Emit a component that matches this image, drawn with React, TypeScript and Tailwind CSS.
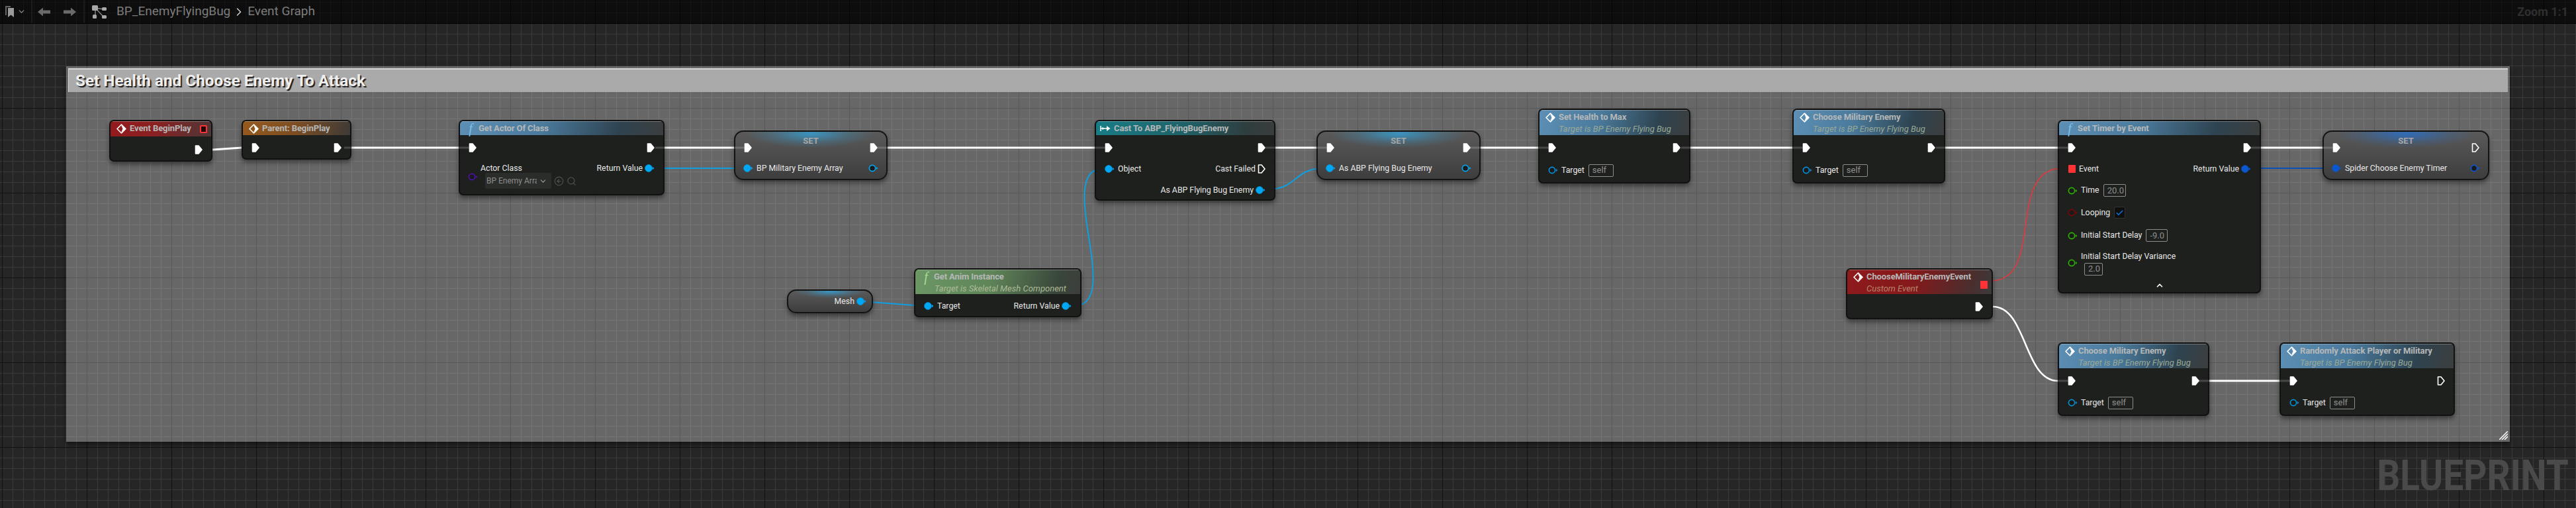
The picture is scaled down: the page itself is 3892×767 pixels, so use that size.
import React from 'react';
import { Check, ChevronDown, ChevronRight, ChevronUp, CircleArrowLeft, Search } from 'lucide-react';

const ExecPin = ({ hollow = false }: { hollow?: boolean }) => (
  <svg width="12" height="14" viewBox="0 0 12 14" className="shrink-0">
    <path
      d="M1.5 1 H6 L11 7 L6 13 H1.5 Z"
      fill={hollow ? 'none' : '#fff'}
      stroke="#fff"
      strokeWidth="1.6"
      strokeLinejoin="round"
    />
  </svg>
);

const DataPin = ({ color, hollow = false }: { color: string; hollow?: boolean }) => (
  <svg width="15" height="12" viewBox="0 0 15 12" className="shrink-0">
    <circle cx="6" cy="6" r={hollow ? 4.6 : 5.4} fill={hollow ? '#1a1a1a' : color} stroke={color} strokeWidth={hollow ? 1.7 : 0.6} />
    <path d="M12 3.8 L14.4 6 L12 8.2 Z" fill={color} />
  </svg>
);

const EventIcon = () => (
  <svg width="15" height="15" viewBox="0 0 15 15" className="shrink-0">
    <path d="M7.5 1 L14 7.5 L7.5 14 L1 7.5 Z" fill="none" stroke="#fff" strokeWidth="1.6" strokeLinejoin="round" />
    <path d="M7 2 L14 7.5 L7 13 L9.5 7.5 Z" fill="#fff" />
  </svg>
);

const FuncIcon = ({ color }: { color: string }) => (
  <span className={`w-[14px] text-center font-['Liberation_Serif'] text-[20px] leading-none italic ${color}`}>f</span>
);

const CastIcon = () => (
  <svg width="16" height="10" viewBox="0 0 16 10" className="-ml-[3px] shrink-0">
    <path d="M1 1 V9 M1 5 H11" stroke="#fff" strokeWidth="1.5" fill="none" />
    <path d="M10 1 L15.5 5 L10 9 Z" fill="#fff" />
    <path d="M3.5 2.5 L6 5 L3.5 7.5 Z" fill="#fff" />
  </svg>
);

const TextBox = ({ children, className = '' }: { children: React.ReactNode; className?: string }) => (
  <span className={`flex h-[19px] items-center rounded-[2px] border border-[#8d8d8d] px-[5px] text-[13px] text-[#8f8f8f] ${className}`}>
    {children}
  </span>
);

type NodeProps = {
  box: string;
  headerClass: string;
  icon?: React.ReactNode;
  title: string;
  subtitle?: string;
  subtitleClass?: string;
  extra?: React.ReactNode;
  children: React.ReactNode;
};

const GraphNode = ({ box, headerClass, icon, title, subtitle, subtitleClass, extra, children }: NodeProps) => (
  <div className={`absolute flex flex-col overflow-hidden rounded-[7px] border-2 border-[#101110] bg-[#1e201e] shadow-[0_4px_7px_rgba(0,0,0,0.45)] ${box}`}>
    <div className={`relative shrink-0 border-t border-white/30 pl-[9px] ${headerClass}`}>
      <div className="flex h-[20px] items-center gap-[5px]">
        {icon}
        <span className="text-[13px] font-bold tracking-[-0.1px] text-[#b6b8b8]">{title}</span>
      </div>
      {subtitle && <div className={`pl-[20px] text-[13px] leading-[16px] italic ${subtitleClass}`}>{subtitle}</div>}
      {extra}
    </div>
    <div className="flex flex-col pt-[3px] text-[12.3px] text-[#e8e8e8]">{children}</div>
  </div>
);

const VarNode = ({ box, glow, children }: { box: string; glow: string; children: React.ReactNode }) => (
  <div className={`absolute flex flex-col overflow-hidden rounded-[14px] border-2 border-[#141414] shadow-[0_4px_7px_rgba(0,0,0,0.45)] ${glow} ${box}`}>
    {children}
  </div>
);

const SetNode = ({ box, glow, name, pin, hollowOut }: { box: string; glow: string; name: string; pin: string; hollowOut?: boolean }) => (
  <VarNode box={box} glow={glow}>
    <div className="flex h-[48px] items-center justify-between px-[13px]">
      <ExecPin />
      <span className="mb-[21px] text-[13px] font-bold text-[#a8a8a8]">SET</span>
      <ExecPin hollow={hollowOut} />
    </div>
    <div className="flex h-[14px] items-center justify-between px-[12px] text-[12.3px] text-[#e8e8e8]">
      <span className="flex items-center gap-[5px]">
        <DataPin color={pin} />
        {name}
      </span>
      <DataPin color={pin} hollow />
    </div>
  </VarNode>
);

const Row = ({ className = 'h-[32px]', children }: { className?: string; children: React.ReactNode }) => (
  <div className={`flex items-center justify-between px-[13px] ${className}`}>{children}</div>
);

const Pin = ({ children, gap = 'gap-[5px]' }: { children: React.ReactNode; gap?: string }) => (
  <span className={`flex items-center ${gap}`}>{children}</span>
);

const TargetRow = ({ className }: { className: string }) => (
  <Row className={className}>
    <Pin>
      <DataPin color="#0a8fd6" hollow />
      Target
      <TextBox className="ml-[1px] w-[38px]">self</TextBox>
    </Pin>
  </Row>
);

const ExecRow = ({ hollowOut }: { hollowOut?: boolean }) => (
  <Row>
    <ExecPin />
    <ExecPin hollow={hollowOut} />
  </Row>
);

const blueHeader = 'bg-[linear-gradient(105deg,#5d8fb5_0%,#4a7a9c_40%,#2e4350_78%,#3c3e3e_100%)]';
const setGlow =
  'bg-[radial-gradient(ellipse_42%_30%_at_50%_4%,#3a93c0_0%,rgba(58,147,192,0.3)_60%,transparent_100%),linear-gradient(#5a5a5a,#3d3d3d)]';
const darkGlow =
  'bg-[radial-gradient(ellipse_42%_30%_at_50%_4%,#2f6cb8_0%,rgba(47,108,184,0.3)_60%,transparent_100%),linear-gradient(#5a5a5a,#3d3d3d)]';
const targetSub = 'text-[#9aa996]';

// pin centre to node edge, these run over the node body
const stubs = [
  [531, 223, 520], [693, 223, 718], [1004, 223, 990], [1109, 223, 1132], [1341, 223, 1326], [1654, 223, 1678],
  [1927, 223, 1912], [1989, 223, 2012], [2237, 223, 2215], [2324, 223, 2340], [2554, 223, 2540], [2708, 223, 2725],
  [2939, 223, 2925], [3109, 223, 3130], [3416, 223, 3400], [3509, 223, 3530], [3109, 575, 3130], [3338, 575, 3320], [3444, 575, 3465],
];

export default function App() {
  return (
    <div className="relative flex h-[767px] w-[3892px] flex-col overflow-hidden bg-[#262626] font-['Roboto',sans-serif] [background-image:linear-gradient(#111_1px,transparent_1px),linear-gradient(to_right,#111_1px,transparent_1px),linear-gradient(#3a3a3a_1px,transparent_1px),linear-gradient(to_right,#3a3a3a_1px,transparent_1px)] [background-position:0_35px,3px_0,0_3px,3px_0] [background-size:128px_128px,128px_128px,16px_16px,16px_16px]">
      {/* top bar */}
      <div className="z-20 flex h-[36px] shrink-0 items-center justify-between border-b border-black bg-black/65 pr-[12px]">
        <div className="flex h-full items-center">
          <div className="flex h-full w-[49px] items-center border-r-2 border-[#1c1c1c] pl-[8px]">
            <svg width="13" height="17" viewBox="0 0 13 17">
              <path d="M0 0 H8 V2 H2 V14 H0 Z" fill="#666" />
              <path d="M4 3 H13 V17 L8.5 13.5 L4 17 Z" fill="#9a9a9a" />
            </svg>
            <ChevronDown size={13} strokeWidth={2.5} className="ml-[5px] text-[#8a8a8a]" />
          </div>
          <div className="flex h-full w-[79px] items-center gap-[20px] border-r-2 border-[#1c1c1c] pl-[8px]">
            <svg width="19" height="14" viewBox="0 0 19 14">
              <path d="M0 7 L8 0.5 V4.5 H19 V9.5 H8 V13.5 Z" fill="#6a6a6a" />
            </svg>
            <svg width="19" height="14" viewBox="0 0 19 14">
              <path d="M19 7 L11 0.5 V4.5 H0 V9.5 H11 V13.5 Z" fill="#6a6a6a" />
            </svg>
          </div>
          <svg width="22" height="20" viewBox="0 0 22 20" className="ml-[11px]">
            <path d="M5 4 L18 6 M5 4 L17 17 M5 4 V16" stroke="#8a8a8a" strokeWidth="1.4" fill="none" />
            <rect x="0" y="0" width="9" height="8" rx="1.5" fill="#a8a8a8" />
            <rect x="15" y="3" width="7" height="5" rx="1.5" fill="#a8a8a8" />
            <rect x="1" y="14" width="6" height="6" rx="1.5" fill="#a8a8a8" />
            <rect x="15" y="15" width="7" height="5" rx="1.5" fill="#a8a8a8" />
          </svg>
          <span className="ml-[15px] text-[19px] text-[#7c7c7c]">BP_EnemyFlyingBug</span>
          <ChevronRight size={20} strokeWidth={1.8} className="mx-[3px] text-[#d0d0d0]" />
          <span className="text-[19px] text-[#7c7c7c]">Event Graph</span>
        </div>
        <span className="text-[18px] font-bold text-[#2f2f2f]">Zoom 1:1</span>
      </div>

      {/* comment box */}
      <div className="absolute top-[100px] left-[100px] h-[567px] w-[3692px] bg-white/30 p-[3px] shadow-[0_3px_8px_rgba(0,0,0,0.55)]">
        <div className="flex h-[36px] items-center border-t-2 border-l border-[#d4d4d4] bg-[#aaaaaa] pl-[10px] text-[24.3px] font-bold text-[#eeeeee] [text-shadow:2px_2px_1px_rgba(0,0,0,0.85)]">
          Set Health and Choose Enemy To Attack
        </div>
        <svg width="13" height="13" viewBox="0 0 13 13" className="absolute right-[3px] bottom-[3px]">
          <path d="M0 13 L13 0 M4 13 L13 4 M8 13 L13 8" stroke="#fff" strokeWidth="1.5" />
        </svg>
      </div>

      <span className="absolute top-[680px] right-[11px] origin-right scale-x-[0.845] text-[65px] leading-[76px] font-bold text-[#4a4a4a]">
        BLUEPRINT
      </span>

      {/* wires */}
      <svg className="absolute top-0 left-0" width="3892" height="767" fill="none">
        <g stroke="#fff" strokeWidth="3">
          <path d="M321 226 L365 223" />
          <path d="M531 223 H693 M1004 223 H1109 M1341 223 H1654 M1927 223 H1989 M2237 223 H2324 M2554 223 H2708 M2939 223 H3109 M3416 223 H3509 M3338 575 H3444" />
          <path d="M3011 463 C3062 463, 3058 575, 3109 575" strokeWidth="2.5" />
        </g>
        <g stroke="#0f9fe0" strokeWidth="2">
          <path d="M1004 254 H1120" />
          <path d="M1303 455 L1381 461" />
          <path d="M1622 462 C1700 462, 1590 254, 1668 254" />
          <path d="M1915 286 C1960 286, 1955 254, 2000 254" />
        </g>
        <path d="M3402 254 H3530" stroke="#0b4fb8" strokeWidth="2" />
        <path d="M3008 424 C3090 424, 3030 254, 3116 254" stroke="#e2383e" strokeWidth="1.6" />
      </svg>

      <GraphNode
        box="left-[165px] top-[181px] h-[63px] w-[156px]"
        headerClass="h-[23px] bg-[linear-gradient(100deg,#931a1c_0%,#8a2022_45%,#4d3737_100%)]"
        icon={<EventIcon />}
        title="Event BeginPlay"
        extra={<span className="absolute top-[5px] right-[6px] h-[12px] w-[11px] rounded-[2px] border-2 border-[#ff3236] bg-[#220505]" />}
      >
        <Row className="h-[34px]">
          <span />
          <ExecPin />
        </Row>
      </GraphNode>

      <GraphNode
        box="left-[365px] top-[181px] h-[60px] w-[166px]"
        headerClass="h-[21px] bg-[linear-gradient(100deg,#97591c_0%,#7c4d22_50%,#3e3a36_100%)]"
        icon={<EventIcon />}
        title="Parent: BeginPlay"
      >
        <ExecRow />
      </GraphNode>

      <GraphNode
        box="left-[693px] top-[181px] h-[114px] w-[311px]"
        headerClass={`h-[21px] ${blueHeader}`}
        icon={<FuncIcon color="text-[#7cc0ea]" />}
        title="Get Actor Of Class"
      >
        <ExecRow />
        <div className="mt-[4px] flex h-[22px] items-center justify-between pr-[13px] pl-[31px]">
          Actor Class
          <Pin gap="gap-[3px]">
            Return Value
            <DataPin color="#00a8f4" />
          </Pin>
        </div>
        <div className="-mt-[4px] flex items-center pl-[12px]">
          <span className="-mt-[12px]">
            <DataPin color="#4b12ad" hollow />
          </span>
          <div className="ml-[11px] flex h-[24px] w-[100px] items-center justify-between rounded-[3px] bg-[#2b2d2b] pr-[6px] pl-[2px] text-[12px] text-[#8e8e8e]">
            <span className="w-[76px] overflow-hidden whitespace-nowrap">BP Enemy Array</span>
            <ChevronDown size={13} className="text-[#a0a0a0]" />
          </div>
          <CircleArrowLeft size={15} className="ml-[4px] text-[#4e4e4e]" />
          <Search size={15} className="ml-[4px] text-[#4e4e4e]" />
        </div>
      </GraphNode>

      <SetNode box="left-[1109px] top-[197px] h-[75px] w-[232px]" glow={setGlow} name="BP Military Enemy Array" pin="#00a8f4" />

      <VarNode box="left-[1189px] top-[437px] h-[36px] w-[130px]" glow={setGlow}>
        <div className="flex h-full items-center justify-end gap-[3px] pr-[8px] text-[12.3px] text-[#e8e8e8]">
          Mesh
          <DataPin color="#00a8f4" />
        </div>
      </VarNode>

      <GraphNode
        box="left-[1381px] top-[405px] h-[74px] w-[253px]"
        headerClass="h-[37px] bg-[linear-gradient(105deg,#6c9765_0%,#5f8559_45%,#39463a_85%,#3c3e3c_100%)]"
        icon={<FuncIcon color="text-[#a8dc94]" />}
        title="Get Anim Instance"
        subtitle="Target is Skeletal Mesh Component"
        subtitleClass="text-[#acba96]"
      >
        <Row className="h-[30px]">
          <Pin>
            <DataPin color="#00a8f4" />
            Target
          </Pin>
          <Pin gap="gap-[3px]">
            Return Value
            <DataPin color="#00a8f4" />
          </Pin>
        </Row>
      </GraphNode>

      <GraphNode
        box="left-[1654px] top-[181px] h-[122px] w-[273px]"
        headerClass="h-[21px] bg-[linear-gradient(100deg,#187d86_0%,#1f6168_50%,#2f3d3e_85%,#3a3d3d_100%)]"
        icon={<CastIcon />}
        title="Cast To ABP_FlyingBugEnemy"
      >
        <ExecRow />
        <Row>
          <Pin>
            <DataPin color="#00a8f4" />
            Object
          </Pin>
          <Pin gap="gap-[3px]">
            Cast Failed
            <ExecPin hollow />
          </Pin>
        </Row>
        <Row>
          <span />
          <Pin gap="gap-[3px]">
            As ABP Flying Bug Enemy
            <DataPin color="#00a8f4" />
          </Pin>
        </Row>
      </GraphNode>

      <SetNode box="left-[1989px] top-[197px] h-[75px] w-[248px]" glow={setGlow} name="As ABP Flying Bug Enemy" pin="#00a8f4" />

      <GraphNode
        box="left-[2324px] top-[164px] h-[113px] w-[230px]"
        headerClass={`h-[38px] ${blueHeader}`}
        icon={<EventIcon />}
        title="Set Health to Max"
        subtitle="Target is BP Enemy Flying Bug"
        subtitleClass={targetSub}
      >
        <ExecRow />
        <TargetRow className="h-[36px]" />
      </GraphNode>

      <GraphNode
        box="left-[2708px] top-[164px] h-[113px] w-[231px]"
        headerClass={`h-[38px] ${blueHeader}`}
        icon={<EventIcon />}
        title="Choose Military Enemy"
        subtitle="Target is BP Enemy Flying Bug"
        subtitleClass={targetSub}
      >
        <ExecRow />
        <TargetRow className="h-[36px]" />
      </GraphNode>

      <GraphNode
        box="left-[2789px] top-[405px] h-[77px] w-[222px]"
        headerClass="h-[37px] bg-[linear-gradient(105deg,#8e1a1c_0%,#85191b_45%,#4a2e2e_85%,#3c3a3a_100%)]"
        icon={<EventIcon />}
        title="ChooseMilitaryEnemyEvent"
        subtitle="Custom Event"
        subtitleClass="text-[#b8856c]"
        extra={<span className="absolute top-[16px] right-[6px] h-[12px] w-[11px] rounded-[1px] bg-[#ff3236]" />}
      >
        <Row className="h-[32px]">
          <span />
          <ExecPin />
        </Row>
      </GraphNode>

      <GraphNode
        box="left-[3109px] top-[181px] h-[262px] w-[307px]"
        headerClass={`h-[21px] ${blueHeader}`}
        icon={<FuncIcon color="text-[#7cc0ea]" />}
        title="Set Timer by Event"
      >
        <ExecRow />
        <Row>
          <Pin gap="gap-[5px]">
            <span className="ml-[1px] h-[12px] w-[11px] rounded-[1px] bg-[#ff3236]" />
            Event
          </Pin>
          <Pin gap="gap-[3px]">
            Return Value
            <DataPin color="#0b57d0" />
          </Pin>
        </Row>
        <Row className="h-[33px]">
          <Pin>
            <DataPin color="#2fb300" hollow />
            Time
            <TextBox className="ml-[1px] w-[34px]">20.0</TextBox>
          </Pin>
        </Row>
        <Row className="h-[34px]">
          <Pin>
            <DataPin color="#7a0509" hollow />
            Looping
            <span className="ml-[1px] flex h-[18px] w-[17px] items-center justify-center rounded-[2px] border border-[#333] bg-[#0f0f0f]">
              <Check size={13} strokeWidth={3} className="text-[#0e70da]" />
            </span>
          </Pin>
        </Row>
        <Row className="h-[35px]">
          <Pin>
            <DataPin color="#2fb300" hollow />
            Initial Start Delay
            <TextBox className="ml-[1px] w-[33px]">-9.0</TextBox>
          </Pin>
        </Row>
        <Row className="h-[48px]">
          <Pin>
            <DataPin color="#2fb300" hollow />
            <span className="flex flex-col items-start gap-[2px] leading-[16px]">
              Initial Start Delay Variance
              <TextBox className="ml-[5px] w-[28px]">2.0</TextBox>
            </span>
          </Pin>
        </Row>
        <div className="flex h-[20px] items-center justify-center">
          <ChevronUp size={14} strokeWidth={3} className="text-white" />
        </div>
      </GraphNode>

      <SetNode box="left-[3509px] top-[197px] h-[75px] w-[252px]" glow={darkGlow} name="Spider Choose Enemy Timer" pin="#0b57d0" hollowOut />

      <GraphNode
        box="left-[3109px] top-[517px] h-[111px] w-[229px]"
        headerClass={`h-[37px] ${blueHeader}`}
        icon={<EventIcon />}
        title="Choose Military Enemy"
        subtitle="Target is BP Enemy Flying Bug"
        subtitleClass={targetSub}
      >
        <ExecRow />
        <TargetRow className="h-[34px]" />
      </GraphNode>

      <GraphNode
        box="left-[3444px] top-[517px] h-[111px] w-[265px]"
        headerClass={`h-[37px] ${blueHeader}`}
        icon={<EventIcon />}
        title="Randomly Attack Player or Military"
        subtitle="Target is BP Enemy Flying Bug"
        subtitleClass={targetSub}
      >
        <ExecRow hollowOut />
        <TargetRow className="h-[34px]" />
      </GraphNode>

      {/* wire ends showing faintly over the node bodies */}
      <svg className="absolute top-0 left-0" width="3892" height="767" fill="none">
        {stubs.map(([x1, y, x2]) => (
          <path key={`${x1}-${y}`} d={`M${x1} ${y} H${x2}`} stroke="#fff" strokeOpacity="0.18" strokeWidth="3" />
        ))}
      </svg>
    </div>
  );
}
